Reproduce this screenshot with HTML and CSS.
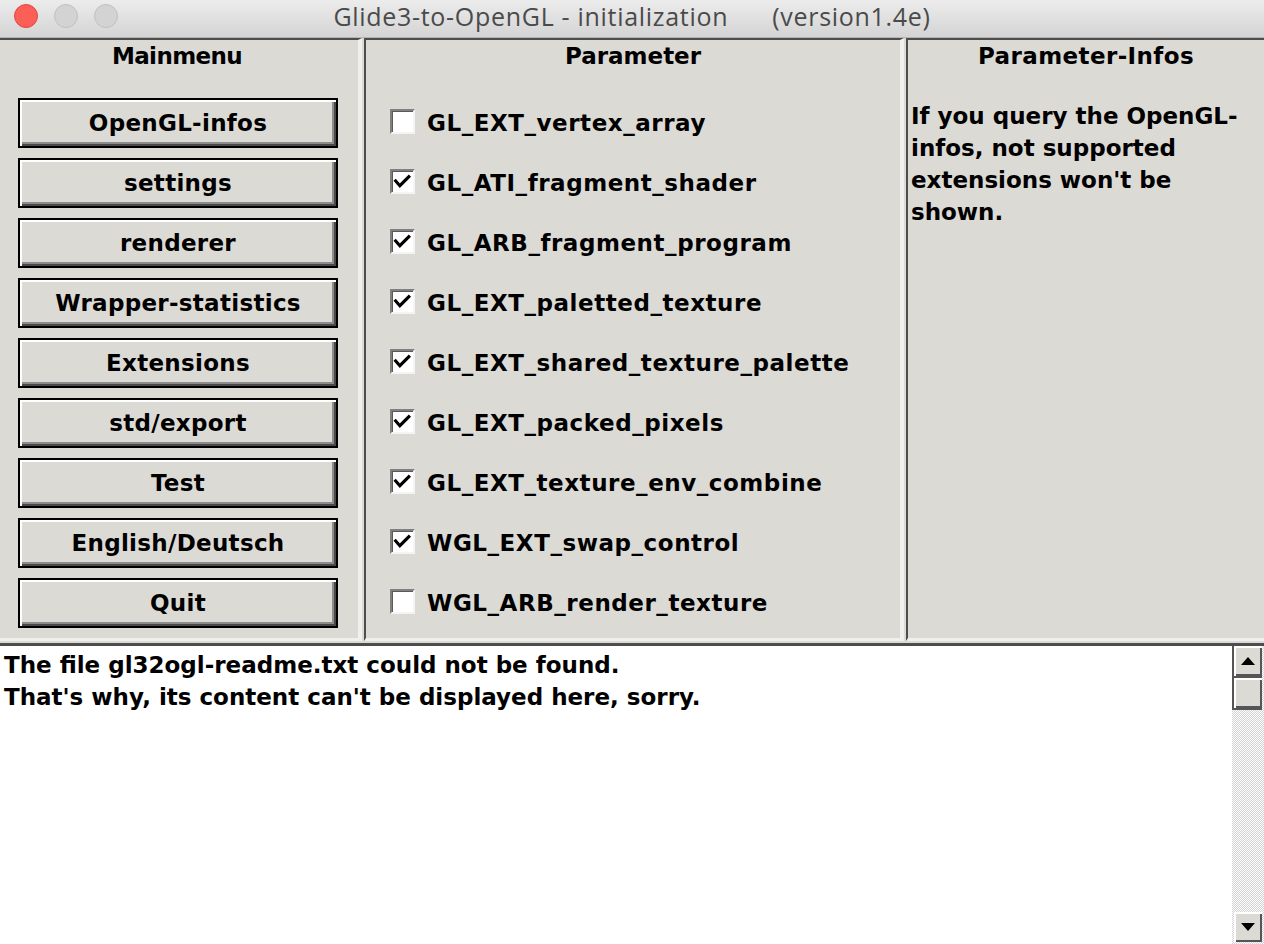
FILE: index.html
```html
<!DOCTYPE html>
<html lang="en">
<head>
<meta charset="utf-8">
<title>Glide3-to-OpenGL - initialization</title>
<link rel="stylesheet" href="styles.css">
</head>
<body>
<header class="titlebar">
  <div class="lights">
    <span class="light close"></span>
    <span class="light"></span>
    <span class="light"></span>
  </div>
  <div class="title"><span>Glide3-to-OpenGL - initialization</span><span class="version">(version1.4e)</span></div>
  <div></div>
</header>

<main class="app">
  <div class="panels">
    <section class="panel menu">
      <h2 class="heading">Mainmenu</h2>
      <div class="buttons">
        <button class="btn">OpenGL-infos</button>
        <button class="btn">settings</button>
        <button class="btn">renderer</button>
        <button class="btn">Wrapper-statistics</button>
        <button class="btn">Extensions</button>
        <button class="btn">std/export</button>
        <button class="btn">Test</button>
        <button class="btn">English/Deutsch</button>
        <button class="btn">Quit</button>
      </div>
    </section>

    <section class="panel params">
      <h2 class="heading">Parameter</h2>
      <ul class="checks">
        <li class="check"><span class="box"></span><span class="label">GL_EXT_vertex_array</span></li>
        <li class="check"><span class="box on"><svg viewBox="0 0 20 20"><polyline points="3.5,9.5 7.5,14 16,5.5"/></svg></span><span class="label">GL_ATI_fragment_shader</span></li>
        <li class="check"><span class="box on"><svg viewBox="0 0 20 20"><polyline points="3.5,9.5 7.5,14 16,5.5"/></svg></span><span class="label">GL_ARB_fragment_program</span></li>
        <li class="check"><span class="box on"><svg viewBox="0 0 20 20"><polyline points="3.5,9.5 7.5,14 16,5.5"/></svg></span><span class="label">GL_EXT_paletted_texture</span></li>
        <li class="check"><span class="box on"><svg viewBox="0 0 20 20"><polyline points="3.5,9.5 7.5,14 16,5.5"/></svg></span><span class="label">GL_EXT_shared_texture_palette</span></li>
        <li class="check"><span class="box on"><svg viewBox="0 0 20 20"><polyline points="3.5,9.5 7.5,14 16,5.5"/></svg></span><span class="label">GL_EXT_packed_pixels</span></li>
        <li class="check"><span class="box on"><svg viewBox="0 0 20 20"><polyline points="3.5,9.5 7.5,14 16,5.5"/></svg></span><span class="label">GL_EXT_texture_env_combine</span></li>
        <li class="check"><span class="box on"><svg viewBox="0 0 20 20"><polyline points="3.5,9.5 7.5,14 16,5.5"/></svg></span><span class="label">WGL_EXT_swap_control</span></li>
        <li class="check"><span class="box"></span><span class="label">WGL_ARB_render_texture</span></li>
      </ul>
    </section>

    <section class="panel info">
      <h2 class="heading">Parameter-Infos</h2>
      <p class="info-text">If you query the OpenGL-<br>infos, not supported<br>extensions won't be<br>shown.</p>
    </section>
  </div>

  <div class="readme">
    <div class="readme-text">The file gl32ogl-readme.txt could not be found.<br>That's why, its content can't be displayed here, sorry.</div>
    <div class="scrollbar">
      <div class="sb-btn sb-top"><svg viewBox="0 0 14 8"><polygon points="7,0 14,8 0,8"/></svg></div>
      <div class="sb-thumb"></div>
      <div class="sb-trough"></div>
      <div class="sb-btn"><svg viewBox="0 0 14 8"><polygon points="0,0 14,0 7,8"/></svg></div>
    </div>
  </div>
</main>
</body>
</html>
```

FILE: styles.css
```css
* { box-sizing: border-box; }

html, body {
  margin: 0;
  padding: 0;
}

body {
  width: 1264px;
  height: 944px;
  overflow: hidden;
  background: #dcdad5;
  color: #000;
  font-family: "DejaVu Sans", "Verdana", sans-serif;
  font-weight: bold;
  font-size: 23px;
  line-height: 32px;
}

/* ---------- macOS title bar ---------- */
.titlebar {
  height: 38px;
  border-bottom: 1px solid #b4b4b4;
  background: linear-gradient(#ececec, #d4d4d4);
  display: grid;
  grid-template-columns: 1fr auto 1fr;
  align-items: start;
}

.lights {
  display: flex;
  gap: 16px;
  padding: 4px 0 0 14px;
}

.light {
  width: 24px;
  height: 24px;
  border-radius: 50%;
  background: #d3d3d3;
  border: 1px solid #c0c0c0;
}

.light.close {
  background: #fc5f58;
  border-color: #e2463f;
}

.title {
  font-family: "Open Sans", "Liberation Sans", sans-serif;
  font-weight: normal;
  font-size: 25px;
  letter-spacing: 0.7px;
  line-height: 33px;
  color: #4a4a4a;
  white-space: nowrap;
  display: flex;
  gap: 44px;
}

/* ---------- panels ---------- */
.app {
  display: flex;
  flex-direction: column;
  height: 906px;
}

.panels {
  display: flex;
  gap: 2px;
  height: 603px;
}

.panel {
  border-top: 2px solid #4d4d4d;
  border-bottom: 3px solid #f1f0ee;
}

.menu {
  width: 362px;
  border-right: 4px solid #f1f0ee;
}

.params {
  width: 540px;
  border-left: 2px solid #4d4d4d;
  border-right: 4px solid #f1f0ee;
}

.info {
  flex: 1;
  border-left: 2px solid #4d4d4d;
}

.heading {
  margin: 0;
  font-size: 23px;
  font-weight: bold;
  line-height: 32px;
  text-align: center;
}

.menu .heading {
  letter-spacing: -0.6px;
  padding-right: 4px;
}

.info .heading {
  letter-spacing: 0.4px;
}

/* ---------- main menu buttons ---------- */
.buttons {
  display: flex;
  flex-direction: column;
  gap: 10px;
  margin-top: 26px;
  padding-left: 18px;
}

.btn {
  width: 320px;
  height: 50px;
  padding: 0;
  font: inherit;
  letter-spacing: 0.3px;
  color: #000;
  background: #dcdad5;
  border: 2px solid #000;
  box-shadow:
    inset 2px 2px #ffffff,
    inset -2px -2px #4a4a4a,
    inset -4px -4px #8c8c8c;
  text-align: center;
}

/* ---------- check buttons ---------- */
.checks {
  list-style: none;
  margin: 26px 0 0 0;
  padding: 0 0 0 24px;
  display: flex;
  flex-direction: column;
  gap: 10px;
}

.check {
  height: 50px;
  display: flex;
  align-items: center;
  gap: 12px;
}

.label {
  letter-spacing: 0.55px;
}

.box {
  width: 25px;
  height: 25px;
  margin-top: -3px;
  background: #fff;
  border: 2px solid;
  border-color: #808080 #f4f4f4 #f4f4f4 #808080;
  box-shadow: inset 1px 1px #5a5a5a;
  display: flex;
}

.box svg {
  width: 21px;
  height: 21px;
}

.box polyline {
  fill: none;
  stroke: #000;
  stroke-width: 3;
  stroke-linecap: square;
}

/* ---------- info ---------- */
.info-text {
  margin: 28px 0 0 0;
  padding-left: 3px;
}

/* ---------- readme text + scrollbar ---------- */
.readme {
  margin-top: 2px;
  flex: 1;
  display: flex;
  border-top: 3px solid #4d4d4d;
}

.readme-text {
  flex: 1;
  background: #fff;
  padding: 3px 0 0 4px;
  white-space: nowrap;
}

.scrollbar {
  width: 32px;
  display: flex;
  flex-direction: column;
  gap: 2px;
  padding: 0 2px 2px 2px;
  background: repeating-conic-gradient(#d2d2d2 0 25%, #ffffff 0 50%) 0 0 / 2px 2px;
}

.sb-btn, .sb-thumb {
  height: 30px;
  background: #dcdad5;
  box-shadow:
    inset 2px 2px #ffffff,
    inset -2px -2px #555555;
  display: flex;
  align-items: center;
  justify-content: center;
}

.sb-top, .sb-thumb {
  outline: 2px solid #555555;
  outline-offset: 0;
  clip-path: inset(0 0 -2px -2px);
}

.sb-btn svg {
  width: 14px;
  height: 8px;
  fill: #000;
}

.sb-trough {
  flex: 1;
}
```
